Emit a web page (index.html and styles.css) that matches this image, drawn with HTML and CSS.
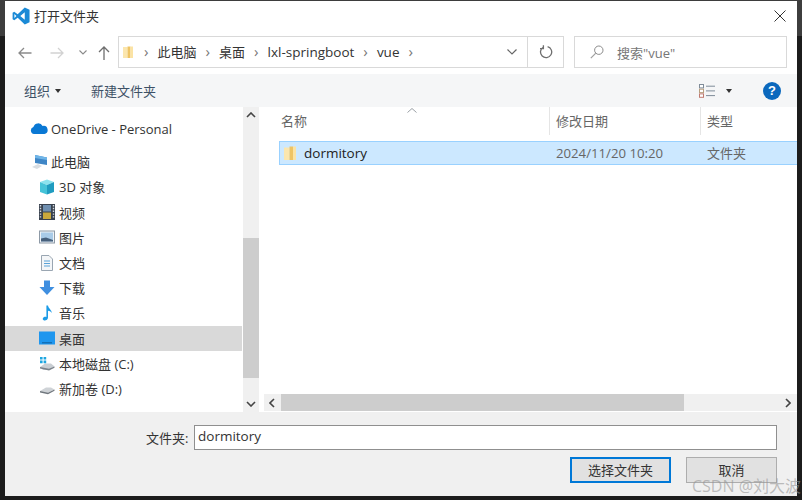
FILE: index.html
```html
<!DOCTYPE html>
<html lang="zh-CN">
<head>
	<meta charset="utf-8">
	<meta name="viewport" content="width=device-width, initial-scale=1.0">
	<title>打开文件夹</title>
	<link rel="stylesheet" href="styles.css">
</head>
<body>
	<div class="window">
		<div class="titlebar">
			<svg class="app-icon" viewBox="0 0 24 24"><path fill="#1b8ad6" fill-rule="evenodd" d="M17 .8 23.4 3.8V20.2L17 23.2 7.6 14.2 3 17.8.8 16.4V7.6L3 6.2 7.6 9.8ZM17 7 11 12 17 17ZM3.2 9.4V14.6L5.9 12Z"/></svg>
			<span class="title">打开文件夹</span>
			<svg class="close" viewBox="0 0 12 12"><path d="M.5.5 11.5 11.5M11.5.5.5 11.5" stroke="#333" stroke-width="1" fill="none"/></svg>
		</div>

		<div class="navbar">
			<div class="nav-btns">
				<svg class="back" viewBox="0 0 14 12"><path d="M13.5 6H1M6 1 1 6 6 11" stroke="#8a8a8a" stroke-width="1.3" fill="none"/></svg>
				<svg class="forward" viewBox="0 0 14 12"><path d="M.5 6H13M8 1 13 6 8 11" stroke="#d2d2d2" stroke-width="1.3" fill="none"/></svg>
				<svg class="recent" viewBox="0 0 8 5"><path d="M.5.5 4 4 7.5.5" stroke="#8a8a8a" stroke-width="1.1" fill="none"/></svg>
				<svg class="up" viewBox="0 0 12 14"><path d="M6 14V1M1 6 6 1 11 6" stroke="#6e6e6e" stroke-width="1.3" fill="none"/></svg>
			</div>
			<div class="address">
				<svg class="crumb-folder" viewBox="0 0 10 12"><path fill="#fbe6ae" d="M0 1H4.500V12H0Z"/><path fill="#eec465" d="M4.500 .5H7.500V12H4.500Z"/><path fill="#fbe3a4" d="M7.500 .5H10V12H7.500Z"/></svg>
				<span class="sep">›</span><span class="crumb">此电脑</span>
				<span class="sep">›</span><span class="crumb">桌面</span>
				<span class="sep">›</span><span class="crumb latin">lxl-springboot</span>
				<span class="sep">›</span><span class="crumb latin">vue</span>
				<span class="sep">›</span>
				<svg class="drop" viewBox="0 0 10 6"><path d="M.5.5 5 5 9.5.5" stroke="#666" stroke-width="1.2" fill="none"/></svg>
				<span class="refresh">
					<svg viewBox="0 0 14 14" width="14" height="14"><path d="M8.6 1.6A5.6 5.6 0 1 1 4.2 2.2M4.4 .2V3.6H1" stroke="#6e6e6e" stroke-width="1.3" fill="none"/></svg>
				</span>
			</div>
			<div class="search">
				<svg viewBox="0 0 14 14" width="14" height="14"><circle cx="8.8" cy="5.2" r="4.2" stroke="#8a8a8a" fill="none"/><path d="M5.8 8.2.8 13.2" stroke="#a0a0a0" stroke-width="1.2"/></svg>
				<span>搜索"vue"</span>
			</div>
		</div>

		<div class="toolbar">
			<span class="tool">组织</span>
			<span class="caret"></span>
			<span class="tool new-folder">新建文件夹</span>
			<svg class="view-icon" viewBox="0 0 16 14"><rect x=".5" y=".5" width="4" height="3.4" fill="#fff" stroke="#7f8c99"/><rect x=".5" y="5.2" width="4" height="3.4" fill="#fff" stroke="#b8a080"/><rect x=".5" y="9.9" width="4" height="3.4" fill="#fff" stroke="#c07a70"/><path d="M7 2.200H16M7 6.900H16M7 11.600H16" stroke="#7f8c99"/></svg>
			<span class="caret view-caret"></span>
			<span class="help">?</span>
		</div>

		<div class="content">
			<div class="tree">
				<div class="tree-row top">
					<svg class="ico-cloud" viewBox="0 0 18 11"><path fill="#0a78d4" d="M4 11A3.6 3.6 0 0 1 3.4 4 5 5 0 0 1 12.6 3 4 4 0 0 1 14.4 11Z"/></svg>
					<span>OneDrive - Personal</span>
				</div>
				<div class="tree-row pc">
					<svg class="ico-pc" viewBox="0 0 16 14"><path fill="#d8dde2" d="M0 12 6 9 10 11 5 14Z"/><path fill="#3f86c6" d="M3 0 15 2.500V10L3 8Z"/><path fill="#6fb5e8" d="M3 0 15 2.500V5L3 3Z"/></svg>
					<span>此电脑</span>
				</div>
				<div class="tree-row">
					<svg class="ico" viewBox="0 0 16 16"><path fill="#8be3ee" d="M1 3 8 .5 15 3 8 6Z"/><path fill="#45c3d8" d="M1 3 8 6V15.500L1 13Z"/><path fill="#1f9cc0" d="M15 3 8 6V15.500L15 13Z"/></svg>
					<span>3D 对象</span>
				</div>
				<div class="tree-row">
					<svg class="ico" viewBox="0 0 16 16"><rect width="16" height="16" fill="#39424f"/><rect x="4" y="1" width="8" height="6.500" fill="#6f8fb0"/><rect x="4" y="8.500" width="8" height="6.500" fill="#c9a93c"/><path d="M1.500 1V15M14.500 1V15" stroke="#d5dbe2" stroke-width="1.400" stroke-dasharray="1.400 1.400"/></svg>
					<span>视频</span>
				</div>
				<div class="tree-row">
					<svg class="ico" viewBox="0 0 16 16"><rect x=".5" y="2" width="15" height="12" fill="#eef2f6" stroke="#8d99a6"/><rect x="2" y="3.500" width="12" height="9" fill="#a9cbe8"/><path fill="#47607c" d="M2 12.500V9.500L7 8.500 14 11V12.500Z"/></svg>
					<span>图片</span>
				</div>
				<div class="tree-row">
					<svg class="ico" viewBox="0 0 16 16"><path fill="#f4f6f8" stroke="#9aa6b2" d="M2.500.5H10L13.500 4V15.500H2.500Z"/><path stroke="#5aa3d8" d="M5 6H11M5 8.500H11M5 11H11"/></svg>
					<span>文档</span>
				</div>
				<div class="tree-row">
					<svg class="ico" viewBox="0 0 16 16"><path fill="#3f8fe0" d="M5 .5H11V7H15.500L8 15 .5 7H5Z"/></svg>
					<span>下载</span>
				</div>
				<div class="tree-row">
					<svg class="ico" viewBox="0 0 16 16"><path fill="#1c9be6" d="M7.400 .5H9C9.400 3.500 12.600 4.500 12.800 8 11.700 6.500 10.500 6 9 5.800V12.500C9 14.500 7 15.800 5.200 15.500 3.800 15.200 3.400 14 4 13 4.800 11.800 6.300 11.500 7.400 12Z"/></svg>
					<span>音乐</span>
				</div>
				<div class="tree-row selected">
					<svg class="ico" viewBox="0 0 16 16"><rect y="1.500" width="16" height="13" fill="#1e96ee"/><path d="M3 12.800H13" stroke="#0f5f9e"/></svg>
					<span>桌面</span>
				</div>
				<div class="tree-row">
					<svg class="ico" viewBox="0 0 16 16"><path fill="#c9ced3" d="M1 12 6 8.500H12L15.500 11.500 10 15H4Z"/><path fill="#7b838b" d="M1 12 10 13.800 15.500 11.500V12.800L10 15.500 1 13.500Z"/><path fill="#1ea6e0" d="M1 2H3.600V4.600H1ZM4.600 2H7.200V4.600H4.600ZM1 5.600H3.600V8.200H1ZM4.600 5.600H7.200V8.200H4.600Z"/></svg>
					<span>本地磁盘 (C:)</span>
				</div>
				<div class="tree-row">
					<svg class="ico" viewBox="0 0 16 16"><path fill="#cfd3d7" d="M1 11 7 7.500H12L15.500 9.500 9 13H4Z"/><path fill="#6f767d" d="M1 11 9 12.800 15.500 9.500V10.800L9 14.300 1 12.500Z"/></svg>
					<span>新加卷 (D:)</span>
				</div>
			</div>

			<div class="vscroll">
				<svg class="arrow" viewBox="0 0 10 6"><path d="M1 5 5 1 9 5" stroke="#444" stroke-width="1.600" fill="none"/></svg>
				<div class="vtrack"><div class="vthumb"></div></div>
				<svg class="arrow" viewBox="0 0 10 6"><path d="M1 1 5 5 9 1" stroke="#444" stroke-width="1.600" fill="none"/></svg>
			</div>

			<div class="list">
				<div class="list-head">
					<span class="col">名称</span>
					<span class="col">修改日期</span>
					<span class="col">类型</span>
					<svg class="sort" viewBox="0 0 10 5"><path d="M.5 4.500 5 .5 9.500 4.500" stroke="#9aa0a6" fill="none"/></svg>
				</div>
				<div class="list-body">
					<div class="file-row">
						<span class="file-name">
							<svg class="file-icon" viewBox="0 0 12 14"><path fill="#fbe6ae" d="M0 1.500H5.500V14H0Z"/><path fill="#eec465" d="M5.500 .5H9V14H5.500Z"/><path fill="#fbe3a4" d="M9 .5H12V14H9Z"/></svg>
							dormitory
						</span>
						<span class="file-date">2024/11/20 10:20</span>
						<span class="file-type">文件夹</span>
					</div>
				</div>
				<div class="hscroll">
					<svg class="harrow" viewBox="0 0 6 10"><path d="M5 1 1 5 5 9" stroke="#444" stroke-width="1.600" fill="none"/></svg>
					<div class="htrack"><div class="hthumb"></div></div>
					<svg class="harrow" viewBox="0 0 6 10"><path d="M1 1 5 5 1 9" stroke="#444" stroke-width="1.600" fill="none"/></svg>
				</div>
			</div>
		</div>

		<div class="footer">
			<div class="name-row">
				<label class="name-label">文件夹:</label>
				<div class="name-input">dormitory</div>
			</div>
			<div class="btn-row">
				<button class="btn primary">选择文件夹</button>
				<button class="btn">取消</button>
			</div>
		</div>
	</div>
	<div class="watermark">CSDN @刘大波</div>
</body>
</html>
```

FILE: styles.css
```css
* {
	box-sizing: border-box;
}
html, body {
	margin: 0;
	height: 100%;
}
body {
	position: relative;
	width: 802px;
	height: 500px;
	overflow: hidden;
	padding: 1px 5px 4px 5px;
	background: linear-gradient(#3d3d3d 0, #3d3d3d 36px, #1c1c1c 36px);
	font-family: "Open Sans", "Noto Sans CJK SC", sans-serif;
	font-size: 13px;
	color: #333;
}
.window {
	display: flex;
	flex-direction: column;
	height: 100%;
	background: #fff;
}

/* title */
.titlebar {
	display: flex;
	align-items: center;
	height: 33px;
	padding: 0 11px 3px 7px;
	flex: none;
}
.app-icon {
	width: 18px;
	height: 18px;
}
.title {
	margin-left: 4px;
	padding-bottom: 2px;
	font-size: 13px;
}
.close {
	margin-left: auto;
	width: 12px;
	height: 12px;
}

/* back / address / search */
.navbar {
	display: flex;
	align-items: flex-start;
	height: 40px;
	padding-top: 2px;
	flex: none;
}
.nav-btns {
	display: flex;
	align-items: center;
	width: 113px;
	height: 33px;
	padding-left: 13px;
}
.nav-btns svg {
	flex: none;
}
.back, .forward {
	width: 14px;
	height: 12px;
}
.forward {
	margin-left: 18px;
}
.recent {
	width: 8px;
	height: 5px;
	margin-left: 15px;
}
.up {
	width: 12px;
	height: 14px;
	margin-left: 11px;
}
.address {
	display: flex;
	align-items: center;
	width: 446px;
	height: 32px;
	border: 1px solid #d9d9d9;
	padding-left: 4px;
}
.crumb-folder {
	width: 10px;
	height: 12px;
	margin-right: 11px;
}
.sep {
	color: #777;
	font-size: 15px;
	line-height: 1;
	margin-right: 9px;
	position: relative;
	top: -1px;
}
.crumb {
	margin-right: 9px;
	padding-bottom: 2px;
	color: #333;
}
.crumb.latin {
	padding-bottom: 0;
	font-size: 13.500px;
}
.drop {
	width: 10px;
	height: 6px;
	margin-left: auto;
	margin-right: 10px;
}
.refresh {
	display: flex;
	align-items: center;
	justify-content: center;
	width: 36px;
	height: 100%;
	border-left: 1px solid #d9d9d9;
}
.search {
	display: flex;
	align-items: center;
	width: 213px;
	height: 32px;
	margin-left: 10px;
	border: 1px solid #d9d9d9;
	padding-left: 15px;
	color: #777;
}
.search span {
	margin-left: 13px;
}

/* toolbar */
.toolbar {
	display: flex;
	align-items: center;
	height: 33px;
	padding-left: 19px;
	background: #f5f6f7;
	flex: none;
}
.tool {
	color: #3d5166;
}
.caret {
	width: 0;
	height: 0;
	margin-left: 5px;
	border: 3.5px solid transparent;
	border-top: 4px solid #333;
	border-bottom: 0;
}
.new-folder {
	margin-left: 30px;
}
.view-icon {
	width: 16px;
	height: 14px;
	margin-left: auto;
}
.view-caret {
	margin-left: 11px;
}
.help {
	display: flex;
	align-items: center;
	justify-content: center;
	width: 18px;
	height: 18px;
	margin: 0 16px 0 31px;
	border-radius: 50%;
	background: #0b68bd;
	color: #fff;
	font: bold 13px "Liberation Sans", sans-serif;
}

/* tree */
.content {
	display: flex;
	flex: 1;
	min-height: 0;
}
.tree {
	width: 237px;
	padding-top: 9px;
	flex: none;
}
.tree-row {
	display: flex;
	align-items: center;
	height: 25.2px;
	padding-left: 34px;
}
.tree-row.top {
	padding-left: 25px;
	margin-bottom: 8px;
}
.tree-row.pc {
	padding-left: 27px;
}
.tree-row.selected {
	background: #d9d9d9;
}
.ico {
	width: 16px;
	height: 16px;
	margin-right: 4px;
	flex: none;
}
.ico-cloud {
	width: 18px;
	height: 11px;
	margin-right: 3px;
}
.ico-pc {
	width: 16px;
	height: 14px;
	margin-right: 3px;
}
.vscroll {
	display: flex;
	flex-direction: column;
	align-items: center;
	width: 16px;
	margin-left: 1px;
	padding: 5px 0;
	background: #f0f0f0;
	flex: none;
}
.arrow {
	width: 10px;
	height: 6px;
	flex: none;
}
.vtrack {
	flex: 1;
	width: 100%;
	padding-top: 120px;
}
.vthumb {
	height: 140px;
	background: #cdcdcd;
}

/* file list */
.list {
	display: flex;
	flex-direction: column;
	flex: 1;
	min-width: 0;
	margin-left: 1px;
	background: #fff;
}
.list-head {
	position: relative;
	display: grid;
	grid-template-columns: 290px 151px 1fr;
	height: 28px;
	flex: none;
}
.col {
	display: flex;
	align-items: center;
	padding: 0 0 2px 6px;
	color: #666;
	border-right: 1px solid #e5e5e5;
}
.col:first-child {
	padding-left: 21px;
}
.col:last-of-type {
	border-right: 0;
}
.sort {
	position: absolute;
	top: 1px;
	left: 147px;
	width: 10px;
	height: 5px;
}
.list-body {
	flex: 1;
	padding: 6px 0 0 19px;
}
.file-row {
	display: grid;
	grid-template-columns: 271px 151px 1fr;
	align-items: center;
	height: 24px;
	background: #cce8ff;
	border: 1px solid #99d1ff;
	border-right: 0;
}
.file-name {
	display: flex;
	align-items: center;
	padding-left: 4px;
	font-size: 13.500px;
	color: #222;
}
.file-icon {
	width: 12px;
	height: 14px;
	margin-right: 8px;
}
.file-date {
	padding-left: 5px;
	font-size: 13.200px;
	color: #666;
}
.file-type {
	padding: 0 0 2px 5px;
	color: #666;
}
.hscroll {
	display: flex;
	align-items: center;
	height: 17px;
	margin: 0 0 1px 4px;
	background: #f0f0f0;
	flex: none;
}
.harrow {
	width: 6px;
	height: 10px;
	margin: 0 6px 0 5px;
	flex: none;
}
.htrack {
	flex: 1;
	height: 100%;
}
.hthumb {
	width: 403px;
	height: 100%;
	background: #cdcdcd;
}

/* name + buttons */
.footer {
	height: 84px;
	padding: 13px 20px 0 0;
	background: #f0f0f0;
	flex: none;
}
.name-row {
	display: flex;
	align-items: center;
	padding-left: 141px;
}
.name-label {
	width: 48px;
}
.name-input {
	flex: 1;
	height: 25px;
	padding-left: 3px;
	line-height: 21px;
	background: #fff;
	border: 1px solid #8f8f8f;
	font-size: 13.500px;
}
.btn-row {
	display: flex;
	justify-content: flex-end;
	gap: 15px;
	margin-top: 7px;
}
.btn {
	width: 91px;
	height: 26px;
	padding: 0 0 2px;
	background: #e1e1e1;
	border: 1px solid #adadad;
	font: inherit;
	color: #333;
}
.btn.primary {
	width: 101px;
	border: 2px solid #0078d7;
}

.watermark {
	position: absolute;
	left: 692px;
	top: 479px;
	color: rgba(150, 150, 150, 0.6);
	font-size: 16px;
	line-height: 14px;
	white-space: nowrap;
}
```
